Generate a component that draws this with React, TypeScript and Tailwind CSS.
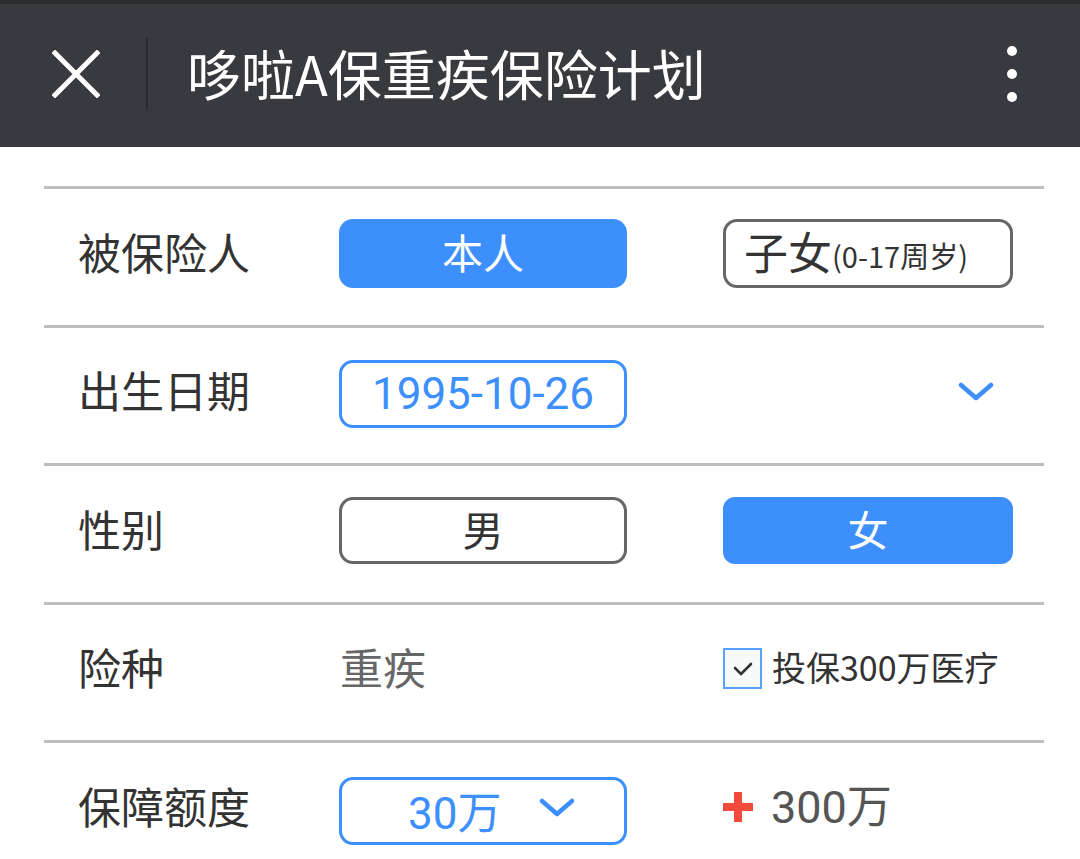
import React from "react";

const cjk = { fontFamily: '"Noto Sans CJK SC", "Noto Sans", sans-serif' };
const num = { fontFamily: 'Roboto, "Noto Sans CJK SC", sans-serif' };

function Chevron({ className }: { className?: string }) {
  return (
    <svg viewBox="0 0 36 20" className={className} fill="none">
      <path d="M3 3 L18 16 L33 3" stroke="#3d8ffe" strokeWidth="4.5" strokeLinecap="round" strokeLinejoin="round" />
    </svg>
  );
}

function Row({ label, children, right }: { label: string; children: React.ReactNode; right?: React.ReactNode }) {
  return (
    <div className="border-t-[3px] border-[#bdbdbd] h-[138.5px] pb-[7px] flex items-center">
      <div className="w-[295px] pl-[34px] text-[43px] leading-none text-[#333] -mt-[4px]" style={cjk}>
        {label}
      </div>
      <div className="w-[384px] shrink-0">{children}</div>
      <div className="flex-1">{right}</div>
    </div>
  );
}

export default function App() {
  return (
    <div className="w-[1080px] h-[859px] bg-white overflow-hidden" style={cjk}>
      <header className="h-[147px] bg-[#393a3f] border-t-4 border-[#2b2c30] flex items-center">
        <div className="w-[146px] flex items-center">
          <svg viewBox="0 0 48 48" className="ml-[52px] w-[48px] h-[48px] -mt-[4px]">
            <path d="M3 3 L45 45 M45 3 L3 45" stroke="white" strokeWidth="5" strokeLinecap="square" />
          </svg>
        </div>
        <div className="w-[2px] h-[71px] bg-[#2a2b2f] -mt-[4px]" />
        <h1 className="ml-[39px] text-[54px] text-white leading-none flex-1 -mt-[6px]" style={cjk}>
          哆啦A保重疾保险计划
        </h1>
        <div className="mr-[63px] flex flex-col gap-[13px] -mt-[4px]">
          <span className="w-[10px] h-[10px] rounded-full bg-white" />
          <span className="w-[10px] h-[10px] rounded-full bg-white" />
          <span className="w-[10px] h-[10px] rounded-full bg-white" />
        </div>
      </header>

      <div className="mt-[39px] ml-[44px] w-[1000px]">
        <Row
          label="被保险人"
          right={
            <div className="w-[290px] h-[69px] rounded-[14px] border-[3px] border-[#666] flex items-center justify-center pr-[24px] text-[#333] leading-none">
              <span className="text-[44px] -mt-[4px]">子女</span>
              <span className="text-[29px] mt-[4px]">(0-17周岁)</span>
            </div>
          }
        >
          <div className="w-[288px] h-[69px] rounded-[14px] bg-[#3d8ffe] text-white text-[41px] leading-none pb-[4px] flex items-center justify-center">
            本人
          </div>
        </Row>
        <Row
          label="出生日期"
          right={
            <div className="flex justify-end pr-[50px]">
              <Chevron className="w-[36px] h-[20px]" />
            </div>
          }
        >
          <div className="mt-[5px] w-[288px] h-[68px] rounded-[14px] border-[3px] border-[#3d8ffe] text-[#3d8ffe] text-[44px] leading-none flex items-center justify-center" style={num}>
            1995-10-26
          </div>
        </Row>
        <Row
          label="性别"
          right={
            <div className="w-[290px] h-[67px] rounded-[12px] bg-[#3d8ffe] text-white text-[41px] leading-none pb-[4px] flex items-center justify-center">
              女
            </div>
          }
        >
          <div className="w-[288px] h-[67px] rounded-[14px] border-[3px] border-[#666] text-[#333] text-[41px] leading-none pb-[4px] flex items-center justify-center">
            男
          </div>
        </Row>
        <Row
          label="险种"
          right={
            <div className="flex items-center gap-[10px] text-[34px] leading-none text-[#333]">
              <span className="w-[39px] h-[41px] border-2 border-[#5aa0ff] bg-[#f6faf9] flex items-center justify-center">
                <svg viewBox="0 0 20 16" className="w-[20px] h-[16px]" fill="none">
                  <path d="M2 7 L8 13 L18 3" stroke="#333" strokeWidth="2.6" strokeLinecap="round" strokeLinejoin="round" />
                </svg>
              </span>
              <span className="-mt-[4px]">投保300万医疗</span>
            </div>
          }
        >
          <div className="pl-[1px] text-[43px] leading-none text-[#666] -mt-[4px]">重疾</div>
        </Row>
        <Row
          label="保障额度"
          right={
            <div className="flex items-center gap-[18px] text-[#555]">
              <svg viewBox="0 0 30 30" className="w-[30px] h-[30px]">
                <path d="M11 0 H19 V11 H30 V19 H19 V30 H11 V19 H0 V11 H11 Z" fill="#f24b3c" />
              </svg>
              <span className="text-[45px] leading-none" style={num}>
                300万
              </span>
            </div>
          }
        >
          <div className="mt-[7px] w-[288px] h-[68px] rounded-[14px] border-[3px] border-[#3d8ffe] text-[#3d8ffe] flex items-center pl-[66px] gap-[38px]">
            <span className="text-[44px] leading-none mt-[6px]" style={num}>
              30万
            </span>
            <Chevron className="w-[36px] h-[20px] -mt-[6px]" />
          </div>
        </Row>
      </div>
    </div>
  );
}
